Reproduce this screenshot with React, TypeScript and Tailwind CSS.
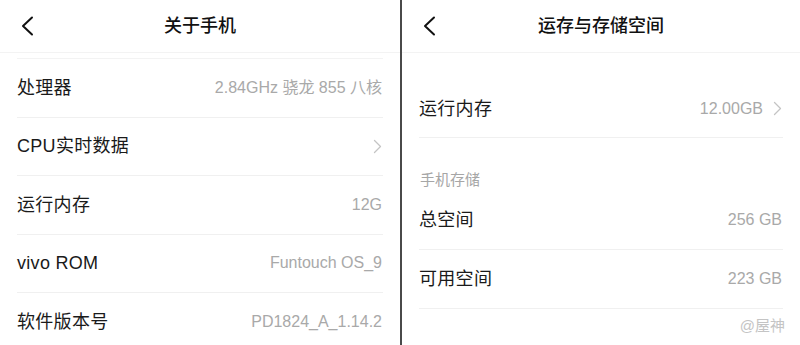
import React from "react";

const font = {
  fontFamily: '"Liberation Sans", "Noto Sans CJK SC", sans-serif',
};

function BackIcon() {
  return (
    <svg width="14" height="20" viewBox="0 0 14 20" fill="none">
      <path d="M12 1.5 L3 10 L12 18.5" stroke="#111" strokeWidth="2" strokeLinecap="round" strokeLinejoin="round" />
    </svg>
  );
}

function Chevron() {
  return (
    <svg width="9" height="15" viewBox="0 0 9 15" fill="none">
      <path d="M1.5 1.5 L7.5 7.5 L1.5 13.5" stroke="#c4c4c4" strokeWidth="1.3" strokeLinecap="round" strokeLinejoin="round" />
    </svg>
  );
}

function Header({ title }: { title: string }) {
  return (
    <div className="relative flex h-[53px] items-center justify-center border-b border-[#f3f3f3]">
      <div className="absolute left-[20px] top-[16px]">
        <BackIcon />
      </div>
      <span className="text-[18px] font-medium text-[#111]">{title}</span>
    </div>
  );
}

function Row({
  label,
  value,
  arrow,
  last,
  h = "h-[58.5px]",
}: {
  label: string;
  value?: string;
  arrow?: boolean;
  last?: boolean;
  h?: string;
}) {
  return (
    <div className={`mx-[17px] flex ${h} items-center justify-between ${last ? "" : "border-b border-[#f0f0f0]"}`}>
      <span className="text-[18px] leading-[26px] tracking-[0.3px] text-[#1a1a1a]">{label}</span>
      <div className="flex items-center gap-[10px] pr-[1px]">
        {value && <span className="text-[16px] leading-[22px] text-[#a9a9a9]">{value}</span>}
        {arrow && <Chevron />}
      </div>
    </div>
  );
}

export default function App() {
  return (
    <div className="flex h-[345px] w-[800px] overflow-hidden bg-white" style={font}>
      <div className="w-[400px] shrink-0">
        <Header title="关于手机" />
        <div className="mx-[17px] h-[6px] border-b border-[#f3f3f3]" />
        <Row label="处理器" value="2.84GHz 骁龙 855 八核" />
        <Row label="CPU实时数据" arrow />
        <Row label="运行内存" value="12G" />
        <Row label="vivo ROM" value="Funtouch OS_9" />
        <Row label="软件版本号" value="PD1824_A_1.14.2" last />
      </div>
      <div className="w-[2px] shrink-0 bg-[#4a4a4a]" />
      <div className="relative flex-1">
        <Header title="运存与存储空间" />
        <div className="h-[27px]" />
        <Row label="运行内存" value="12.00GB" arrow h="h-[58px]" />
        <div className="flex h-[53px] items-end px-[18px] pb-[1px]">
          <span className="text-[15px] leading-[20px] text-[#a6a6a6]">手机存储</span>
        </div>
        <Row label="总空间" value="256 GB" h="h-[59px]" />
        <Row label="可用空间" value="223 GB" h="h-[59px]" />
        <span className="absolute bottom-[8px] right-[15px] text-[15px] text-[#c4c4c4]">@屋神</span>
      </div>
    </div>
  );
}
